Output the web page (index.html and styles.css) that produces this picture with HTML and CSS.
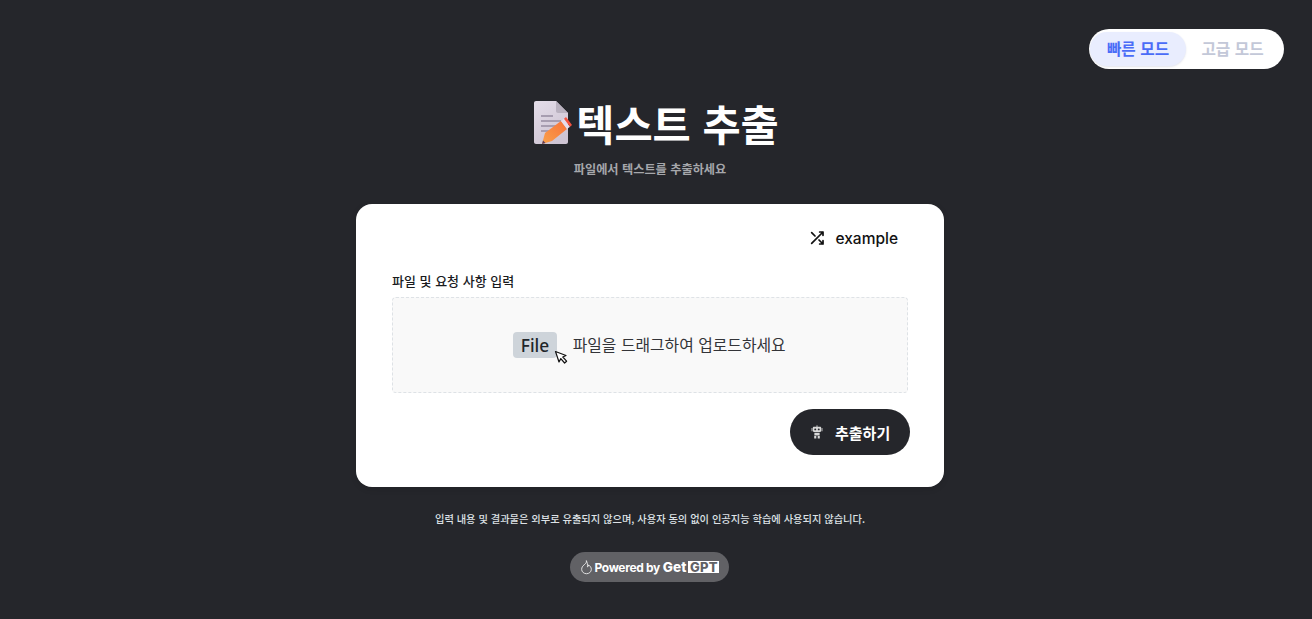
FILE: index.html
```html
<!DOCTYPE html>
<html lang="ko">
<head>
<meta charset="utf-8">
<title>텍스트 추출</title>
<link rel="stylesheet" href="styles.css">
</head>
<body>
<div class="page">
  <div class="mode-toggle">
    <button class="mode mode-active">빠른 모드</button>
    <button class="mode mode-idle">고급 모드</button>
  </div>
  <header class="head">
    <h1 class="title">
      <svg class="title-icon" viewBox="-1 0 44 44" width="44" height="44" aria-hidden="true">
        <defs>
          <linearGradient id="paper" x1="0" y1="0" x2="0.6" y2="1"><stop offset="0" stop-color="#e4dde9"/><stop offset="1" stop-color="#cec4d3"/></linearGradient>
          <linearGradient id="pencil" x1="0" y1="1" x2="1" y2="0"><stop offset="0" stop-color="#f9a24a"/><stop offset="1" stop-color="#f8713a"/></linearGradient>
        </defs>
        <path d="M4 2C4 .9 4.900 0 6 0H26L38 12V41C38 42.100 37.100 43 36 43H6C4.900 43 4 42.100 4 41Z" fill="url(#paper)"/>
        <path d="M26 0L38 12H28C26.900 12 26 11.100 26 10Z" fill="#b9b1bf"/>
        <path d="M11 15H23M11 20H31M11 25H31M11 30H23" stroke="#a79db0" stroke-width="2" fill="none"/>
        <path d="M12 43L15 32L31 20L37 28L22 40Z" fill="url(#pencil)"/>
        <path d="M31 20L34 17.700L40 25.700L37 28Z" fill="#e6dcec"/>
        <path d="M34 17.700L36 16L42 24L40 25.700Z" fill="#f4523f"/>
        <path d="M13 39.500L15.500 42L12 43Z" fill="#5a3b5c"/>
      </svg><span>텍스트 추출</span>
    </h1>
    <p class="subtitle">파일에서 텍스트를 추출하세요</p>
  </header>
  <main class="card">
    <div class="example-row">
      <button class="example">
        <svg viewBox="0 0 24 24" width="16" height="16" fill="none" stroke="#111" stroke-width="2.600" stroke-linecap="round" stroke-linejoin="round" aria-hidden="true">
          <path d="M16 3h5v5M4 20L21 3M21 16v5h-5M15 15l6 6M4 4l5 5"/>
        </svg>
        <span>example</span>
      </button>
    </div>
    <label class="field-label">파일 및 요청 사항 입력</label>
    <div class="drop">
      <span class="file-chip">File
        <svg class="cursor" viewBox="0 0 14 15" width="14" height="15" aria-hidden="true">
          <path d="M1.500 1.500L5 12L6.800 8.600L10.600 13L12.600 11.200L8.800 7L12 5.500Z" fill="#fff" stroke="#111" stroke-width="1.200" stroke-linejoin="round"/>
        </svg>
      </span>
      <span class="drop-text">파일을 드래그하여 업로드하세요</span>
    </div>
    <div class="actions">
      <button class="submit">
        <svg viewBox="0 0 16 16" width="14" height="14" fill="#d8d8d8" aria-hidden="true">
          <path d="M7.300 .5h1.400V2H7.300z"/>
          <path d="M4.500 2h7c.8 0 1.300.5 1.300 1.300v3.400c0 .8-.5 1.300-1.300 1.300h-7c-.8 0-1.300-.5-1.300-1.300V3.300C3.200 2.500 3.700 2 4.500 2z"/>
          <circle cx="6" cy="5" r="1.100" fill="#25262b"/><circle cx="10" cy="5" r="1.100" fill="#25262b"/>
          <path d="M1.800 3.500h.9v3.500h-.9zM13.300 3.500h.9v3.500h-.9z"/>
          <path d="M5 8.800h6v3.200H5zM4.800 12.500h2.400v3H4.800zM8.800 12.500h2.400v3H8.800z"/>
        </svg>
        <span>추출하기</span>
      </button>
    </div>
  </main>
  <p class="notice">입력 내용 및 결과물은 외부로 유출되지 않으며, 사용자 동의 없이 인공지능 학습에 사용되지 않습니다.</p>
  <div class="powered">
    <svg viewBox="0 0 14 16" width="13" height="15" fill="none" stroke="#e8e8e8" stroke-width="1" stroke-linecap="round" aria-hidden="true">
      <path d="M7 1C7.500 3.200 5.300 4 4.300 5.300C2.800 6.400 1.800 8 1.800 10C1.800 12.800 4.200 14.700 7 14.700S12.200 12.800 12.200 10C12.200 8 11 6.300 9.300 5.300C9.300 6.500 8.800 7 8 7.300C8.300 5 8 3 7 1Z"/>
    </svg>
    <span class="powered-text">Powered by</span>
    <span class="get">Get</span><span class="gpt">GPT</span>
  </div>
</div>
</body>
</html>
```
FILE: styles.css
```css
* { box-sizing: border-box; }
html, body { margin: 0; height: 100%; }
body {
  background: #25262b;
  font-family: "Noto Sans CJK KR", "Noto Sans", sans-serif;
  overflow: hidden;
}
button { font: inherit; border: 0; cursor: pointer; }
.page {
  position: relative;
  width: 1300px;
  display: flex;
  flex-direction: column;
  align-items: center;
  padding-top: 94px;
}
.mode-toggle {
  position: absolute;
  top: 29px;
  right: 16px;
  width: 195px;
  height: 40px;
  padding: 3px 2px 3px 1px;
  display: flex;
  align-items: center;
  background: #fff;
  border-radius: 20px;
}
.mode {
  height: 34px;
  padding: 0;
  border-radius: 17px;
  background: transparent;
  font-size: 15.700px;
  font-weight: 700;
  line-height: 34px;
  white-space: nowrap;
}
.mode-active {
  width: 96px;
  background: #e9edfe;
  color: #4a6cf7;
  box-shadow: 0 1px 2px rgba(70, 80, 130, .15);
}
.mode-idle {
  width: 93px;
  color: #c3c8d8;
}
.head {
  display: flex;
  flex-direction: column;
  align-items: center;
}
.title {
  margin: 0 0 0 8px;
  display: flex;
  align-items: center;
  height: 58px;
  color: #fff;
  font-size: 41.500px;
  font-weight: 700;
  line-height: 58px;
  white-space: nowrap;
}
.title-icon { margin-right: 3px; }
.subtitle {
  margin: 7px 0 0;
  color: #a6a7ab;
  font-size: 12.200px;
  font-weight: 700;
  line-height: 20px;
}
.card {
  margin-top: 25px;
  width: 588px;
  height: 283px;
  padding: 19px 36px 32px;
  background: #fff;
  border-radius: 16px;
  box-shadow: 0 2px 6px rgba(0, 0, 0, .12);
}
.example-row {
  display: flex;
  justify-content: flex-end;
  padding-right: 10px;
}
.example {
  display: flex;
  align-items: center;
  gap: 10px;
  height: 30px;
  padding: 0;
  background: transparent;
  color: #111;
  font-family: "Inter", sans-serif;
  font-size: 15.500px;
  font-weight: 500;
}
.field-label {
  display: block;
  margin-top: 19px;
  color: #1a1b1e;
  font-size: 13px;
  font-weight: 500;
  line-height: 18px;
}
.drop {
  margin-top: 7px;
  height: 96px;
  display: flex;
  align-items: center;
  justify-content: center;
  gap: 16px;
  background: #f9f9f9;
  border: 1px dashed #dee2e6;
  border-radius: 4px;
}
.file-chip {
  position: relative;
  height: 26px;
  padding: 0 7.500px;
  background: #ced4da;
  border-radius: 4px;
  color: #212529;
  font-family: "Noto Sans", sans-serif;
  font-size: 17.300px;
  font-weight: 500;
  line-height: 27px;
  margin-left: -1px;
}
.cursor {
  position: absolute;
  right: -11px;
  bottom: -7px;
}
.drop-text {
  color: #333438;
  font-size: 15.850px;
  line-height: 26px;
}
.actions {
  display: flex;
  justify-content: flex-end;
  margin: 16px -2px 0 0;
}
.submit {
  display: flex;
  align-items: center;
  gap: 11px;
  width: 120px;
  height: 46px;
  padding: 0 0 0 20px;
  background: #25262b;
  border-radius: 23px;
  color: #fff;
  font-size: 15px;
  font-weight: 700;
  white-space: nowrap;
}
.notice {
  margin: 23px 0 0;
  color: #dee2e6;
  font-size: 10.260px;
  font-weight: 500;
  line-height: 18px;
}
.powered {
  margin: 24px 2px 0 0;
  width: 159px;
  height: 30px;
  padding-left: 10px;
  display: flex;
  align-items: center;
  background: #616165;
  border-radius: 15px;
  color: #fff;
  font-family: "Inter", sans-serif;
  font-weight: 700;
  white-space: nowrap;
}
.powered-text { margin-left: 2px; font-size: 12px; letter-spacing: -.35px; }
.get { margin-left: 3px; font-size: 13.600px; font-weight: 800; }
.gpt {
  margin-left: 2px;
  width: 31px;
  height: 12px;
  text-align: center;
  background: #fff;
  color: #616165;
  font-size: 13px;
  font-weight: 800;
  line-height: 12px;
  letter-spacing: .3px;
}
```
